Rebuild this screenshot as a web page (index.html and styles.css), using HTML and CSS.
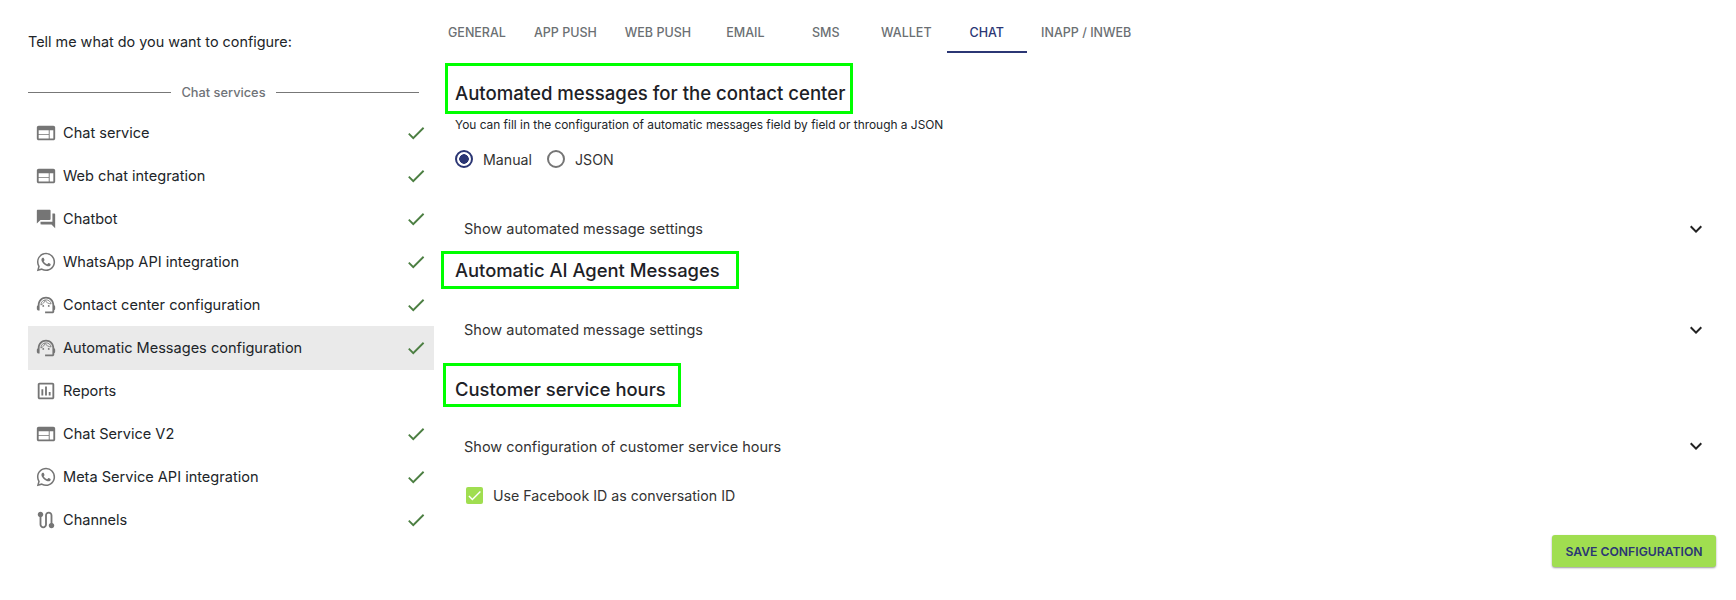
FILE: index.html
```html
<!DOCTYPE html>
<html lang="en-US">
<head>
<title>Chat configuration</title>
<link rel="stylesheet" href="styles.css">
</head>
<body>
<svg class="Defs" aria-hidden="true">
    <symbol id="i-web" viewBox="0 0 24 24"><path d="M20 4H4c-1.1 0-1.99.9-1.99 2L2 18c0 1.1.9 2 2 2h16c1.1 0 2-.9 2-2V6c0-1.1-.9-2-2-2zm-5 14H4v-4h11v4zm0-5H4V9h11v4zm5 5h-4V9h4v9z"/></symbol>
    <symbol id="i-forum" viewBox="0 0 24 24"><path d="M21 6h-2v9H6v2c0 .55.45 1 1 1h11l4 4V7c0-.55-.45-1-1-1zm-4 6V3c0-.55-.45-1-1-1H3c-.55 0-1 .45-1 1v14l4-4h10c.55 0 1-.45 1-1z"/></symbol>
    <symbol id="i-whatsapp" viewBox="0 0 24 24"><path d="M19.05 4.91A9.816 9.816 0 0 0 12.04 2c-5.46 0-9.91 4.45-9.91 9.91 0 1.75.46 3.45 1.32 4.95L2.05 22l5.25-1.38c1.45.79 3.08 1.21 4.74 1.21 5.46 0 9.91-4.45 9.91-9.91 0-2.65-1.03-5.14-2.9-7.01zm-7.01 15.24c-1.48 0-2.93-.4-4.2-1.15l-.3-.18-3.12.82.83-3.04-.2-.32a8.188 8.188 0 0 1-1.26-4.38c0-4.54 3.7-8.24 8.24-8.24 2.2 0 4.27.86 5.82 2.42a8.183 8.183 0 0 1 2.41 5.83c.02 4.54-3.68 8.24-8.22 8.24zm4.52-6.16c-.25-.12-1.47-.72-1.69-.81-.23-.08-.39-.12-.56.12-.17.25-.64.81-.78.97-.14.17-.29.19-.54.06-.25-.12-1.05-.39-1.99-1.23-.74-.66-1.23-1.47-1.38-1.72-.14-.25-.02-.38.11-.51.11-.11.25-.29.37-.43s.17-.25.25-.41c.08-.17.04-.31-.02-.43s-.56-1.34-.76-1.84c-.2-.48-.41-.42-.56-.43h-.48c-.17 0-.43.06-.66.31-.22.25-.86.85-.86 2.07 0 1.22.89 2.4 1.01 2.56.12.17 1.75 2.67 4.23 3.74.59.26 1.05.41 1.41.52.59.19 1.13.16 1.56.1.48-.07 1.47-.6 1.67-1.18.21-.58.21-1.07.14-1.18s-.22-.16-.47-.28z"/></symbol>
    <symbol id="i-agent" viewBox="0 0 24 24"><path d="M21 12.22C21 6.73 16.74 3 12 3c-4.69 0-9 3.65-9 9.28-.6.34-1 .98-1 1.72v2c0 1.1.9 2 2 2h1v-6.1c0-3.87 3.13-7 7-7s7 3.13 7 7V19h-8v2h8c1.1 0 2-.9 2-2v-1.22c.59-.31 1-.92 1-1.64v-2.3c0-.7-.41-1.31-1-1.62z"/><circle cx="9" cy="13" r="1"/><circle cx="15" cy="13" r="1"/><path class="AgentFringe" d="M17.6 10.8C17 8.1 14.8 6.4 12 6.4c-2.9 0-5.6 2.2-5.6 5.6 2.2-.9 3.9-2.9 4.5-5.1 1.4 2.3 3.8 3.8 6.7 3.9z"/></symbol>
    <symbol id="i-poll" viewBox="0 0 24 24"><path d="M9 17H7v-7h2v7zm4 0h-2V7h2v10zm4 0h-2v-4h2v4zm2 2H5V5h14v14zm0-16H5c-1.1 0-2 .9-2 2v14c0 1.1.9 2 2 2h14c1.1 0 2-.9 2-2V5c0-1.1-.9-2-2-2z"/></symbol>
    <symbol id="i-route" viewBox="0 0 24 24"><path d="M19 15.18V7c0-2.21-1.79-4-4-4s-4 1.79-4 4v10c0 1.1-.9 2-2 2s-2-.9-2-2V8.82C8.16 8.4 9 7.3 9 6c0-1.66-1.34-3-3-3S3 4.34 3 6c0 1.3.84 2.4 2 2.82V17c0 2.21 1.79 4 4 4s4-1.79 4-4V7c0-1.1.9-2 2-2s2 .9 2 2v8.18c-1.16.41-2 1.51-2 2.82 0 1.66 1.34 3 3 3s3-1.34 3-3c0-1.3-.84-2.4-2-2.82z"/></symbol>
    <symbol id="i-check" viewBox="0 0 24 24"><path d="M9 16.17L4.83 12l-1.42 1.41L9 19 21 7l-1.41-1.41z"/></symbol>
    <symbol id="i-chevron" viewBox="0 0 24 24"><path d="M16.59 8.59L12 13.17 7.41 8.59 6 10l6 6 6-6z"/></symbol>
</svg>

<div class="Page">
    <aside class="Side">
        <p class="Intro">Tell me what do you want to configure:</p>
        <div class="Divider"><span>Chat services</span></div>
        <ul class="Menu">
            <li class="MenuItem"><svg class="MenuIcon"><use href="#i-web"/></svg><span class="MenuLabel">Chat service</span><svg class="Done"><use href="#i-check"/></svg></li>
            <li class="MenuItem"><svg class="MenuIcon"><use href="#i-web"/></svg><span class="MenuLabel">Web chat integration</span><svg class="Done"><use href="#i-check"/></svg></li>
            <li class="MenuItem"><svg class="MenuIcon"><use href="#i-forum"/></svg><span class="MenuLabel">Chatbot</span><svg class="Done"><use href="#i-check"/></svg></li>
            <li class="MenuItem"><svg class="MenuIcon"><use href="#i-whatsapp"/></svg><span class="MenuLabel">WhatsApp API integration</span><svg class="Done"><use href="#i-check"/></svg></li>
            <li class="MenuItem"><svg class="MenuIcon"><use href="#i-agent"/></svg><span class="MenuLabel">Contact center configuration</span><svg class="Done"><use href="#i-check"/></svg></li>
            <li class="MenuItem Selected"><svg class="MenuIcon"><use href="#i-agent"/></svg><span class="MenuLabel">Automatic Messages configuration</span><svg class="Done"><use href="#i-check"/></svg></li>
            <li class="MenuItem"><svg class="MenuIcon"><use href="#i-poll"/></svg><span class="MenuLabel">Reports</span></li>
            <li class="MenuItem"><svg class="MenuIcon"><use href="#i-web"/></svg><span class="MenuLabel">Chat Service V2</span><svg class="Done"><use href="#i-check"/></svg></li>
            <li class="MenuItem"><svg class="MenuIcon"><use href="#i-whatsapp"/></svg><span class="MenuLabel">Meta Service API integration</span><svg class="Done"><use href="#i-check"/></svg></li>
            <li class="MenuItem"><svg class="MenuIcon"><use href="#i-route"/></svg><span class="MenuLabel">Channels</span><svg class="Done"><use href="#i-check"/></svg></li>
        </ul>
    </aside>

    <main class="Main">
        <nav class="Tabs">
            <a class="Tab">General</a>
            <a class="Tab">App push</a>
            <a class="Tab">Web push</a>
            <a class="Tab">Email</a>
            <a class="Tab">SMS</a>
            <a class="Tab">Wallet</a>
            <a class="Tab Active">Chat</a>
            <a class="Tab">Inapp / Inweb</a>
        </nav>

        <h2 class="Heading HeadingOne">Automated messages for the contact center<span class="Mark MarkOne"></span></h2>
        <p class="Hint">You can fill in the configuration of automatic messages field by field or through a JSON</p>
        <div class="Radios">
            <label class="Radio"><span class="RadioDot On"></span>Manual</label>
            <label class="Radio"><span class="RadioDot"></span>JSON</label>
        </div>
        <div class="Summary SummaryOne"><span>Show automated message settings</span><svg class="Chevron"><use href="#i-chevron"/></svg></div>

        <h2 class="Heading HeadingTwo">Automatic AI Agent Messages<span class="Mark MarkTwo"></span></h2>
        <div class="Summary SummaryTwo"><span>Show automated message settings</span><svg class="Chevron"><use href="#i-chevron"/></svg></div>

        <h2 class="Heading HeadingThree">Customer service hours<span class="Mark MarkThree"></span></h2>
        <div class="Summary SummaryThree"><span>Show configuration of customer service hours</span><svg class="Chevron"><use href="#i-chevron"/></svg></div>

        <label class="Check"><span class="CheckBox"><svg class="CheckTick"><use href="#i-check"/></svg></span>Use Facebook ID as conversation ID</label>

        <div class="Actions"><button class="Save">Save configuration</button></div>
    </main>
</div>
</body>
</html>
```

FILE: styles.css
```css
body {
    margin: 0;
    background: #FFF;
    color: #212529;
    font-family: "Inter", "Roboto", sans-serif;
    font-size: 14.4px;
}

.Defs {
    display: none;
}

.Page {
    display: flex;
    height: 600px;
    overflow: hidden;
    padding-left: 28px;
    padding-right: 20px;
}

.Side {
    width: 406px;
    flex: none;
}

.Intro {
    margin: 0;
    padding-top: 33px;
    line-height: 18px;
}

.Divider {
    display: flex;
    align-items: center;
    gap: 10px;
    width: 391px;
    margin-top: 32px;
    height: 18px;
    color: #6F7378;
    font-size: 12.8px;
    font-weight: 500;
}

.Divider::before,
.Divider::after {
    content: "";
    flex: 1;
    height: 1px;
    background: #777;
}

.Menu {
    list-style: none;
    margin: 0;
    padding: 0;
    margin-top: 10px;
}

.MenuItem {
    display: flex;
    align-items: center;
    height: 43.1px;
    padding-left: 7px;
    font-size: 14.55px;
}

.Selected {
    background: #EAEAEA;
}

.MenuIcon {
    width: 22px;
    height: 22px;
    fill: #757575;
    flex: none;
}

.AgentFringe {
    fill: none;
    stroke: #757575;
    stroke-width: .9;
}

.MenuLabel {
    flex: 1;
    margin-left: 6px;
}

.Done {
    width: 22px;
    height: 22px;
    fill: #4C7F42;
    margin-right: 7px;
}

.Main {
    flex: 1;
    padding-left: 14px;
    min-width: 0;
}

.Tabs {
    display: flex;
    height: 53px;
    margin-left: -14px;
    padding-top: 8px;
    box-sizing: border-box;
}

.Tab {
    min-width: 80.5px;
    box-sizing: border-box;
    padding: 0 14px;
    height: 45px;
    line-height: 49px;
    text-align: center;
    text-transform: uppercase;
    font-size: 12.5px;
    font-weight: 500;
    color: #6B6F73;
}

.Active {
    color: #2B3674;
    border-bottom: 2px solid #2B3674;
}

.Heading {
    position: relative;
    margin: 0;
    margin-left: 7px;
    width: max-content;
    font-size: 18.4px;
    line-height: 24px;
    font-weight: 500;
    color: #1D2126;
}

.HeadingOne {
    margin-top: 28px;
    font-size: 18.6px;
}

.HeadingTwo {
    margin-top: 5px;
}

.HeadingThree {
    margin-top: 23px;
}

/* green annotation boxes sit over the headings */
.Mark {
    position: absolute;
    border: 3px solid #00FF00;
    box-sizing: border-box;
}

.MarkOne {
    left: -10px;
    right: -8px;
    top: -18px;
    bottom: -9px;
}

.MarkTwo {
    left: -14px;
    right: -19px;
    top: -7px;
    bottom: -7px;
}

.MarkThree {
    left: -12px;
    right: -15px;
    top: -13.5px;
    bottom: -6px;
}

.Hint {
    margin: 0;
    margin-left: 7px;
    margin-top: 12px;
    font-size: 11.9px;
    line-height: 16px;
}

.Radios {
    display: flex;
    gap: 15px;
    margin-left: 7px;
    margin-top: 17px;
}

.Radio {
    display: flex;
    align-items: center;
    gap: 10px;
    color: #333;
    font-size: 14.2px;
}

.RadioDot {
    width: 18px;
    height: 18px;
    box-sizing: border-box;
    border: 2px solid #757575;
    border-radius: 50%;
}

.RadioDot.On {
    border-color: #2B3674;
    background: radial-gradient(circle, #2B3674 0 4.5px, transparent 5px);
}

.Summary {
    display: flex;
    justify-content: space-between;
    align-items: center;
    height: 48px;
    padding: 0 8px 0 16px;
    color: #333;
    font-size: 14.5px;
}

.SummaryOne {
    margin-top: 36.5px;
}

.SummaryTwo {
    margin-top: 24px;
}

.SummaryThree {
    margin-top: 21.5px;
}

.Chevron {
    width: 24px;
    height: 24px;
    fill: #222;
}

.Check {
    display: flex;
    align-items: center;
    gap: 10px;
    margin-left: 18px;
    margin-top: 17px;
    color: #333;
    font-size: 14.2px;
}

.CheckBox {
    display: flex;
    width: 17px;
    height: 17px;
    border-radius: 2px;
    background: #A0DE50;
}

.CheckTick {
    width: 17px;
    height: 17px;
    fill: #FFF;
}

.Actions {
    display: flex;
    justify-content: flex-end;
    margin-top: 31px;
}

.Save {
    width: 164px;
    height: 32px;
    border: 0;
    border-radius: 3px;
    background: #A0DE50;
    color: #2B3674;
    text-transform: uppercase;
    font-family: inherit;
    font-size: 12.2px;
    font-weight: 600;
    box-shadow: 0 1px 2px rgba(0,0,0,.4);
}
```
